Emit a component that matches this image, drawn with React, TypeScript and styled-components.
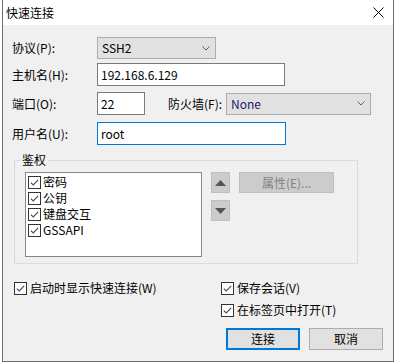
import React from 'react';
import styled, { createGlobalStyle } from 'styled-components';

const GlobalStyle = createGlobalStyle`
  html, body {
    margin: 0;
    padding: 0;
    background: #ffffff;
  }
  body {
    font-family: "Noto Sans CJK SC", "Noto Sans", sans-serif;
    font-size: 12px;
    color: #000000;
  }
`;

const Window = styled.div`
  margin: -1px 0 0 2px;
  width: 392px;
  height: 363px;
  box-sizing: border-box;
  border: 1px solid #6e6e6e;
  background: #f0f0f0;
  display: flex;
  flex-direction: column;
`;

const TitleBar = styled.div`
  height: 25px;
  flex: none;
  background: #ffffff;
  display: flex;
  align-items: center;
  justify-content: space-between;
  padding-left: 3px;
  line-height: 14px;
`;

const CloseBox = styled.div`
  width: 30px;
  height: 25px;
  display: flex;
  align-items: center;
  justify-content: center;
`;

const Body = styled.div`
  flex: 1;
  padding: 12px 0 0 9px;
  display: flex;
  flex-direction: column;
`;

const FormRow = styled.div<{ $mt?: number }>`
  display: flex;
  align-items: center;
  margin-top: ${(p) => p.$mt ?? 0}px;
  line-height: 14px;
`;

const Label = styled.span<{ $w: number; $ml?: number }>`
  width: ${(p) => p.$w}px;
  margin-left: ${(p) => p.$ml ?? 0}px;
  flex: none;
`;

const TextBox = styled.div<{ $w: number; $focus?: boolean }>`
  width: ${(p) => p.$w}px;
  height: 23px;
  box-sizing: border-box;
  border: 1px solid ${(p) => (p.$focus ? '#0078d7' : '#7a7a7a')};
  background: #ffffff;
  padding-left: 3px;
  display: flex;
  align-items: center;
`;

const Combo = styled.div<{ $w: number }>`
  width: ${(p) => p.$w}px;
  height: 22px;
  box-sizing: border-box;
  border: 1px solid #adadad;
  background: #e1e1e1;
  padding: 0 5px 0 4px;
  display: flex;
  align-items: center;
  justify-content: space-between;
`;

const ComboText = styled.span<{ $color?: string }>`
  color: ${(p) => p.$color ?? '#000000'};
`;

const Group = styled.fieldset`
  margin: 8px 0 0 2px;
  width: 344px;
  height: 111px;
  box-sizing: border-box;
  border: 1px solid #dcdcdc;
  padding: 5px 0 0 10px;
  min-width: 0;
`;

const Legend = styled.legend`
  padding: 0 2px;
  margin-left: -5px;
  line-height: 14px;
  height: 14px;
`;

const GroupInner = styled.div`
  display: flex;
  align-items: flex-start;
`;

const ListBox = styled.div`
  width: 177px;
  height: 85px;
  box-sizing: border-box;
  border: 1px solid #828790;
  background: #ffffff;
  padding: 1px 0 0 2px;
`;

const ListItem = styled.div`
  height: 16px;
  display: flex;
  align-items: center;
  line-height: 14px;
`;

const SideButtons = styled.div`
  margin-left: 9px;
  display: flex;
  flex-direction: column;
  gap: 7px;
`;

const ArrowButton = styled.div`
  width: 19px;
  height: 21px;
  box-sizing: border-box;
  border: 1px solid #bfbfbf;
  background: #cccccc;
  display: flex;
  align-items: center;
  justify-content: center;
`;

const PropsButton = styled.div`
  margin-left: 9px;
  width: 95px;
  height: 21px;
  box-sizing: border-box;
  border: 1px solid #bfbfbf;
  background: #cccccc;
  color: #838383;
  display: flex;
  align-items: center;
  justify-content: center;
  line-height: 14px;
`;

const OptionsRow = styled.div`
  margin: 17px 0 0 2px;
  display: flex;
`;

const OptionsColumn = styled.div<{ $w?: number }>`
  width: ${(p) => (p.$w ? `${p.$w}px` : 'auto')};
  display: flex;
  flex-direction: column;
  gap: 8px;
`;

const CheckRow = styled.div`
  height: 14px;
  display: flex;
  align-items: center;
  line-height: 14px;
`;

const CheckBox = styled.span<{ $gap: number }>`
  width: 13px;
  height: 13px;
  flex: none;
  box-sizing: border-box;
  border: 1px solid #333333;
  background: #ffffff;
  margin-right: ${(p) => p.$gap}px;
  display: flex;
  align-items: center;
  justify-content: center;
`;

const ButtonRow = styled.div`
  margin-top: 11px;
  padding-right: 10px;
  display: flex;
  justify-content: flex-end;
  gap: 9px;
`;

const DialogButton = styled.div<{ $default?: boolean }>`
  width: 74px;
  height: 22px;
  box-sizing: border-box;
  border: ${(p) => (p.$default ? '2px solid #0078d7' : '1px solid #adadad')};
  background: #e1e1e1;
  display: flex;
  align-items: center;
  justify-content: center;
  line-height: 14px;
`;

const Chevron = () => (
  <svg width="8" height="5" viewBox="0 0 8 5">
    <path d="M0.5 0.5 L4 4 L7.5 0.5" fill="none" stroke="#606060" strokeWidth="1" />
  </svg>
);

const Check = ({ gap = 3 }: { gap?: number }) => (
  <CheckBox $gap={gap}>
    <svg width="11" height="11" viewBox="0 0 11 11">
      <path d="M1.8 5.6 L4.2 8 L9.2 2.8" fill="none" stroke="#4a4a4a" strokeWidth="1.1" />
    </svg>
  </CheckBox>
);

const authItems = ['密码', '公钥', '键盘交互', 'GSSAPI'];

const App = () => {
  return (
    <>
      <GlobalStyle />
      <Window>
        <TitleBar>
          <span>快速连接</span>
          <CloseBox>
            <svg width="11" height="11" viewBox="0 0 11 11">
              <path d="M0.5 0.5 L10.5 10.5 M10.5 0.5 L0.5 10.5" stroke="#000" strokeWidth="1" />
            </svg>
          </CloseBox>
        </TitleBar>
        <Body>
          <FormRow>
            <Label $w={85}>协议(P):</Label>
            <Combo $w={119}>
              <ComboText>SSH2</ComboText>
              <Chevron />
            </Combo>
          </FormRow>
          <FormRow $mt={4}>
            <Label $w={85}>主机名(H):</Label>
            <TextBox $w={188}>192.168.6.129</TextBox>
          </FormRow>
          <FormRow $mt={6}>
            <Label $w={85}>端口(O):</Label>
            <TextBox $w={48}>22</TextBox>
            <Label $w={58} $ml={23}>防火墙(F):</Label>
            <Combo $w={145}>
              <ComboText $color="#1b1b6b">None</ComboText>
              <Chevron />
            </Combo>
          </FormRow>
          <FormRow $mt={7}>
            <Label $w={85}>用户名(U):</Label>
            <TextBox $w={189} $focus>root</TextBox>
          </FormRow>

          <Group>
            <Legend>鉴权</Legend>
            <GroupInner>
              <ListBox>
                {authItems.map((item) => (
                  <ListItem key={item}>
                    <Check gap={2} />
                    {item}
                  </ListItem>
                ))}
              </ListBox>
              <SideButtons>
                <ArrowButton>
                  <svg width="11" height="6" viewBox="0 0 11 6">
                    <path d="M5.5 0 L11 6 L0 6 Z" fill="#555555" />
                  </svg>
                </ArrowButton>
                <ArrowButton>
                  <svg width="11" height="6" viewBox="0 0 11 6">
                    <path d="M0 0 L11 0 L5.5 6 Z" fill="#555555" />
                  </svg>
                </ArrowButton>
              </SideButtons>
              <PropsButton>属性(E)...</PropsButton>
            </GroupInner>
          </Group>

          <OptionsRow>
            <OptionsColumn $w={207}>
              <CheckRow>
                <Check />
                启动时显示快速连接(W)
              </CheckRow>
            </OptionsColumn>
            <OptionsColumn>
              <CheckRow>
                <Check />
                保存会话(V)
              </CheckRow>
              <CheckRow>
                <Check />
                在标签页中打开(T)
              </CheckRow>
            </OptionsColumn>
          </OptionsRow>

          <ButtonRow>
            <DialogButton $default>连接</DialogButton>
            <DialogButton>取消</DialogButton>
          </ButtonRow>
        </Body>
      </Window>
    </>
  );
};

export default App;
